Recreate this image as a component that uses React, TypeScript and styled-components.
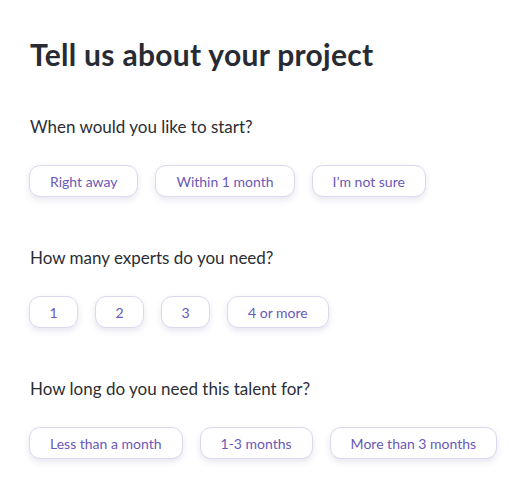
import React from 'react';
import styled, { createGlobalStyle } from 'styled-components';

const GlobalStyle = createGlobalStyle`
  body {
    margin: 0;
    background: #ffffff;
    font-family: Lato, "Noto Sans", sans-serif;
  }
`;

const Page = styled.div`
  padding: 36px 20px 10px 29px;
`;

const Title = styled.h1`
  margin: 0 0 43px 1px;
  font-size: 30px;
  line-height: 36px;
  font-weight: 700;
  color: #282b33;
  letter-spacing: 0.3px;
`;

const Section = styled.section`
  margin-bottom: 49px;

  &:last-child {
    margin-bottom: 0;
  }
`;

const Question = styled.h2`
  margin: 0 0 26px 1px;
  font-size: 17px;
  line-height: 24px;
  font-weight: 400;
  color: #2b2e35;
`;

const Options = styled.div`
  display: flex;
  gap: 17px;
`;

const Option = styled.button<{ $narrow?: boolean }>`
  flex-shrink: 0;
  white-space: nowrap;
  height: 32px;
  padding: 0 ${(p) => (p.$narrow ? '0' : '20px')};
  width: ${(p) => (p.$narrow ? '49px' : 'auto')};
  border: 1px solid #dcd8ee;
  border-radius: 11px;
  background: #ffffff;
  color: #6a58b8;
  font-family: Lato, "Noto Sans", sans-serif;
  font-size: 14px;
  cursor: pointer;
  box-shadow: 0 3px 6px rgba(90, 80, 150, 0.14);
`;

const sections = [
  { q: 'When would you like to start?', options: ['Right away', 'Within 1 month', 'I’m not sure'] },
  { q: 'How many experts do you need?', options: ['1', '2', '3', '4 or more'] },
  { q: 'How long do you need this talent for?', options: ['Less than a month', '1-3 months', 'More than 3 months'] },
];

const App: React.FC = () => (
  <>
    <GlobalStyle />
    <Page>
      <Title>Tell us about your project</Title>
      {sections.map((s) => (
        <Section key={s.q}>
          <Question>{s.q}</Question>
          <Options>
            {s.options.map((o) => (
              <Option key={o} $narrow={o.length === 1}>
                {o}
              </Option>
            ))}
          </Options>
        </Section>
      ))}
    </Page>
  </>
);

export default App;
